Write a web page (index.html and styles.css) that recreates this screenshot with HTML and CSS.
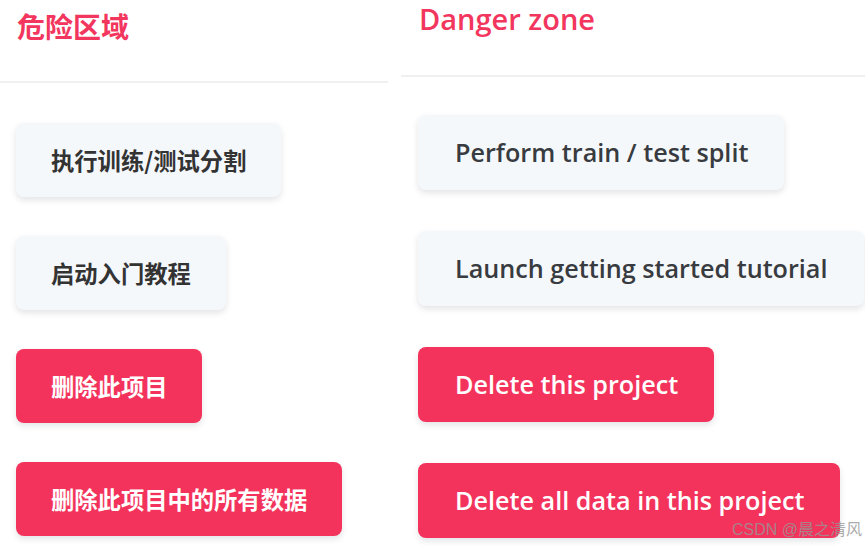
FILE: index.html
```html
<!DOCTYPE html>
<html lang="zh">
<head>
<meta charset="utf-8">
<title>Danger zone</title>
<link rel="stylesheet" href="styles.css">
</head>
<body>
<div class="page">
  <section class="panel panel-zh">
    <h2 class="title">危险区域</h2>
    <div class="actions">
      <button class="btn btn-light">执行训练/测试分割</button>
      <button class="btn btn-light">启动入门教程</button>
      <button class="btn btn-danger">删除此项目</button>
      <button class="btn btn-danger">删除此项目中的所有数据</button>
    </div>
  </section>
  <section class="panel panel-en">
    <h2 class="title">Danger zone</h2>
    <div class="actions">
      <button class="btn btn-light">Perform train / test split</button>
      <button class="btn btn-light">Launch getting started tutorial</button>
      <button class="btn btn-danger">Delete this project</button>
      <button class="btn btn-danger">Delete all data in this project</button>
    </div>
  </section>
  <div class="watermark">CSDN @晨之清风</div>
</div>
</body>
</html>
```
FILE: styles.css
```css
* { box-sizing: border-box; }
html, body { margin: 0; padding: 0; background: #fff; }
.page {
  position: relative;
  width: 865px;
  height: 546px;
  overflow: hidden;
  display: grid;
  grid-template-columns: 388px 1fr;
  column-gap: 13px;
}
.panel { display: flex; flex-direction: column; }
.title {
  margin: 0;
  color: #f2365e;
  border-bottom: 2px solid #f0f0f0;
}
.actions { display: flex; flex-direction: column; align-items: flex-start; }
.btn {
  border: none;
  border-radius: 8px;
  white-space: nowrap;
  cursor: pointer;
  box-shadow: 0 3px 6px rgba(40, 50, 70, 0.13);
}
.btn-light { background: #f5f8fb; color: #333; }
.btn-danger { background: #f3335b; color: #fff; }

/* Chinese panel */
.panel-zh .title {
  font-family: "Noto Sans CJK SC", "Noto Sans", sans-serif;
  font-weight: 700;
  font-size: 28px;
  line-height: 28px;
  padding: 12px 0 41px 17px;
}
.panel-zh .actions { padding: 40px 0 0 16px; gap: 39px; }
.panel-zh .btn {
  font-family: "Noto Sans CJK SC", "Noto Sans", sans-serif;
  font-weight: 700;
  font-size: 23.3px;
  line-height: 30px;
  padding: 22px 35px;
}

/* English panel */
.panel-en .title {
  font-family: "Open Sans", "Noto Sans", sans-serif;
  font-weight: 600;
  font-size: 29px;
  line-height: 29px;
  padding: 4px 0 42px 18px;
}
.panel-en .actions { padding: 38px 0 0 17px; gap: 41px; }
.panel-en .btn {
  font-family: "Open Sans", "Noto Sans", sans-serif;
  font-size: 25.2px;
  font-weight: 600;
  line-height: 35px;
  padding: 20px 36px 20px 37px;
}
.panel-en .btn-light { color: #383b40; }

.watermark {
  position: absolute;
  right: 3px;
  bottom: 6px;
  font-family: "Liberation Sans", "Noto Sans CJK SC", sans-serif;
  font-size: 16px;
  line-height: 20px;
  color: rgba(150, 150, 150, 0.8);
}
```
